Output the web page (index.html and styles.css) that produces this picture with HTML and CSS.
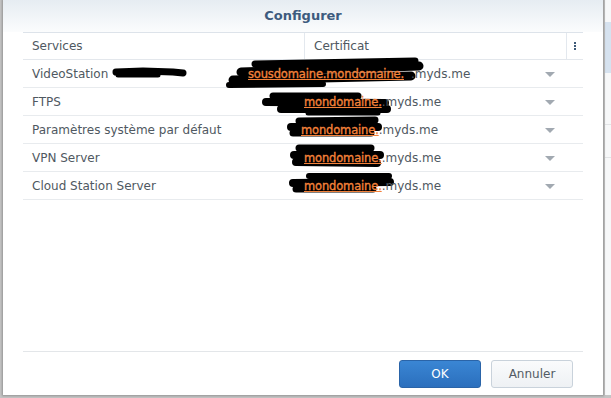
FILE: index.html
```html
<!DOCTYPE html>
<html lang="fr">
<head>
<meta charset="utf-8">
<title>Configurer</title>
<link rel="stylesheet" href="styles.css">
</head>
<body>
<div class="screen">
  <div class="dialog">
    <div class="head">Configurer</div>
    <div class="grid">
      <div class="hrow">
        <div class="hcell">Services</div>
        <div class="hcell sep">Certificat</div>
        <div class="hcell sep kebab"><span></span><span></span><span></span></div>
      </div>

      <div class="row">
        <svg class="blob" width="560" height="28" viewBox="0 0 560 28">
          <path class="w7" d="M93 12 L120 11 L150 12 L160 13" />
          <path class="w5" d="M95 15 L135 15" />
          <path class="w9" d="M218 12 L396 6" />
          <path class="w9" d="M210 20 L388 16" />
          <path class="w7" d="M232 4 L392 1" />
          <path class="w6" d="M206 25 L300 24" />
        </svg>
        <div class="cell">VideoStation</div>
        <div class="cell cert c1"><a>sousdomaine.mondomaine.</a><span class="sfx s1">.myds.me</span></div>
        <div class="cell caret-cell"></div>
      </div>

      <div class="row">
        <svg class="blob" width="560" height="28" viewBox="0 0 560 28">
          <path class="w7" d="M250 8 L335 8" />
          <path class="w8" d="M243 14 L362 15" />
          <path class="w8" d="M258 21 L364 21" />
          <path class="w5" d="M285 25 L355 25" />
        </svg>
        <div class="cell">FTPS</div>
        <div class="cell cert c2"><a>mondomaine.</a><span class="sfx">.myds.me</span></div>
        <div class="cell caret-cell"></div>
      </div>

      <div class="row">
        <svg class="blob" width="560" height="28" viewBox="0 0 560 28">
          <path class="w7" d="M276 5 L352 4" />
          <path class="w8" d="M268 11 L355 11" />
          <path class="w7" d="M270 17 L348 17" />
        </svg>
        <div class="cell">Paramètres système par défaut</div>
        <div class="cell cert c3"><a>mondomaine.</a><span class="sfx">.myds.me</span></div>
        <div class="cell caret-cell"></div>
      </div>

      <div class="row">
        <svg class="blob" width="560" height="28" viewBox="0 0 560 28">
          <path class="w7" d="M276 4 L348 4" />
          <path class="w8" d="M271 11 L357 11" />
          <path class="w8" d="M273 18 L354 19" />
        </svg>
        <div class="cell">VPN Server</div>
        <div class="cell cert c2"><a>mondomaine.</a><span class="sfx">.myds.me</span></div>
        <div class="cell caret-cell"></div>
      </div>

      <div class="row">
        <svg class="blob" width="560" height="28" viewBox="0 0 560 28">
          <path class="w6" d="M286 4 L366 4" />
          <path class="w8" d="M270 11 L367 10" />
          <path class="w7" d="M273 17 L350 17" />
        </svg>
        <div class="cell">Cloud Station Server</div>
        <div class="cell cert c2"><a>mondomaine.</a><span class="sfx">.myds.me</span></div>
        <div class="cell caret-cell"></div>
      </div>
    </div>
    <div class="spacer"></div>
    <div class="foot">
      <button class="btn ok">OK</button>
      <button class="btn cancel">Annuler</button>
    </div>
  </div>
  <div class="backdrop">
    <div class="band"></div>
    <div class="bline first"></div>
    <div class="bline second"></div>
  </div>
</div>
</body>
</html>
```

FILE: styles.css
```css
* { box-sizing: border-box; }
html, body { margin: 0; padding: 0; }
body {
  width: 611px;
  height: 398px;
  overflow: hidden;
  background: #f6f7f8;
  font-family: "DejaVu Sans", Verdana, sans-serif;
  font-size: 12px;
  color: #4f5861;
}
.screen {
  display: flex;
  height: 398px;
  background: #c4c4c4;
  padding-left: 3px;
}
.dialog {
  flex: none;
  width: 600px;
  height: 395px;
  background: #fff;
  display: flex;
  flex-direction: column;
  box-shadow: 0 0 2px 1px rgba(0,0,0,0.25);
  position: relative;
  z-index: 1;
}
.head {
  height: 32px;
  line-height: 31px;
  text-align: center;
  font-weight: bold;
  font-size: 13px;
  color: #3d5b7e;
  background: linear-gradient(#e6ecf2, #fbfcfd);
}
.grid {
  margin: 0 20px;
}
.hrow, .row {
  display: grid;
  grid-template-columns: 281px 262px 17px;
}
.hrow {
  height: 28px;
  border-top: 1px solid #dde3ea;
  border-bottom: 1px solid #e3e7ec;
}
.hcell {
  padding-left: 9px;
  line-height: 26px;
  white-space: nowrap;
}
.hcell.sep { border-left: 1px solid #e3e8ee; }
.kebab {
  display: flex;
  flex-direction: column;
  align-items: center;
  justify-content: center;
  gap: 1px;
  padding-left: 0;
}
.kebab span {
  width: 2px;
  height: 2px;
  background: #3e5a78;
}
.row {
  height: 28px;
  border-bottom: 1px solid #e8ebee;
  position: relative;
}
.cell {
  position: relative;
  z-index: 1;
  padding-left: 9px;
  padding-top: 1px;
  line-height: 26px;
  white-space: nowrap;
}
.blob {
  position: absolute;
  left: 0;
  top: 0;
  overflow: visible;
  z-index: 0;
}
.blob path {
  fill: none;
  stroke: #000;
  stroke-width: 6;
  stroke-linecap: round;
  stroke-linejoin: round;
}
.blob .w4 { stroke-width: 4; }
.blob .w5 { stroke-width: 5; }
.blob .w6 { stroke-width: 6; }
.blob .w7 { stroke-width: 7; }
.blob .w8 { stroke-width: 8; }
.blob .w9 { stroke-width: 9; }
.cert {
  display: flex;
  align-items: center;
  position: relative;
  padding-right: 36px;
}
.cert a {
  color: #f3823a;
  text-decoration: underline;
  font-size: 11.5px;
  letter-spacing: -0.15px;
  -webkit-text-stroke: 0.35px #f3823a;
}
.cert .sfx { margin-left: 0; }
.cert .sfx.s1 { margin-left: 7px; }
.c1 { padding-left: 0; margin-left: -56px; }
.c2 { padding-left: 0; margin-left: 0; }
.c3 { padding-left: 0; margin-left: -3px; }
.caret-cell {
  position: relative;
  padding: 0;
}
.caret-cell::before {
  content: "";
  position: absolute;
  left: -21px;
  top: 12px;
  border-left: 5px solid transparent;
  border-right: 5px solid transparent;
  border-top: 5px solid #a2a9b1;
}
.spacer { flex: 1; }
.foot {
  margin: 0 20px;
  border-top: 1px solid #e3e6e9;
  height: 44px;
  padding: 8px 10px 0 0;
  display: flex;
  justify-content: flex-end;
  gap: 10px;
}
.btn {
  width: 82px;
  height: 28px;
  border-radius: 3px;
  font-family: "DejaVu Sans", Verdana, sans-serif;
  font-size: 12px;
  padding: 0;
}
.ok {
  color: #fff;
  border: 1px solid #2a64a8;
  background: linear-gradient(#3a86d4, #2b6fbd);
}
.cancel {
  color: #525b64;
  border: 1px solid #c9d2db;
  background: linear-gradient(#fafbfc, #eef1f4);
}
.backdrop {
  flex: 1;
  background: #f7f8f9;
  margin-left: 2px;
  padding-top: 22px;
  height: 395px;
}
.band {
  height: 51px;
  background: #d6e2ef;
}
.bline {
  border-top: 1px solid #e2e4e6;
}
.bline.first { margin-top: 51px; }
.bline.second { margin-top: 32px; }
```
